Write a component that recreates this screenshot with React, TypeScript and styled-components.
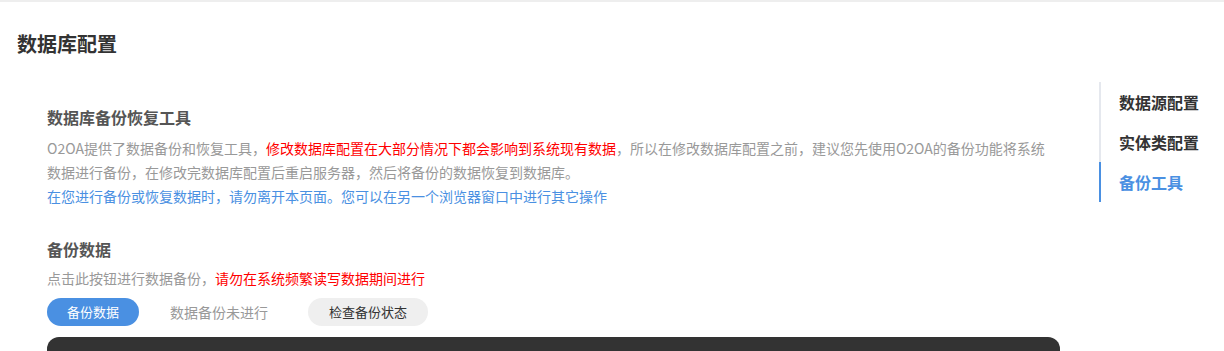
import styled, { createGlobalStyle } from 'styled-components';

const GlobalStyle = createGlobalStyle`
  html, body {
    margin: 0;
    padding: 0;
    background: #fff;
    font-family: "Noto Sans CJK SC", "Noto Sans", sans-serif;
  }
`;

const Page = styled.div`
  width: 1224px;
  height: 351px;
  overflow: hidden;
  border-top: 2px solid #eeeeee;
  box-sizing: border-box;
`;

const PageTitle = styled.h1`
  margin: 0;
  padding: 22px 0 0 17px;
  font-size: 20px;
  line-height: 40px;
  font-weight: bold;
  color: #333;
`;

const Body = styled.div`
  display: flex;
  margin-top: 18px;
`;

const Content = styled.div`
  width: 1013px;
  padding-left: 47px;
  flex-shrink: 0;
`;

const SectionTitle = styled.div<{ $gap: number }>`
  margin-top: ${(p) => p.$gap}px;
  font-size: 16px;
  line-height: 30px;
  font-weight: bold;
  color: #555;
`;

const Text = styled.div<{ $gap?: number }>`
  max-width: 1002px;
  margin-top: ${(p) => p.$gap ?? 0}px;
  font-size: 14px;
  line-height: 24px;
  color: #999;
`;

const Red = styled.span`
  color: #ff0000;
`;

const Blue = styled.div`
  font-size: 14px;
  line-height: 24px;
  color: #4a90e2;
`;

const ActionRow = styled.div`
  display: flex;
  align-items: center;
  margin-top: 8px;
  height: 28px;
`;

const Pill = styled.button<{ $primary?: boolean }>`
  height: 28px;
  padding: 0 ${(p) => (p.$primary ? 20 : 21)}px;
  border: none;
  border-radius: 14px;
  font-family: inherit;
  font-size: 13px;
  line-height: 28px;
  cursor: pointer;
  background: ${(p) => (p.$primary ? '#4a90e2' : '#efefef')};
  color: ${(p) => (p.$primary ? '#fff' : '#333')};
`;

const Status = styled.span`
  margin: 0 40px 0 31px;
  font-size: 14px;
  color: #999;
`;

const Console = styled.div`
  margin-top: 11px;
  height: 260px;
  background: #333;
  border-radius: 12px;
`;

const Nav = styled.nav`
  margin-left: 39px;
  display: flex;
  flex-direction: column;
`;

const NavItem = styled.div<{ $active?: boolean }>`
  height: 40px;
  line-height: 40px;
  padding-left: 18px;
  border-left: 2px solid ${(p) => (p.$active ? '#4a90e2' : '#e5e8ee')};
  font-size: 16px;
  font-weight: bold;
  color: ${(p) => (p.$active ? '#4a90e2' : '#333')};
  cursor: pointer;
`;

export default function App() {
  return (
    <>
      <GlobalStyle />
      <Page>
        <PageTitle>数据库配置</PageTitle>
        <Body>
          <Content>
            <SectionTitle $gap={20}>数据库备份恢复工具</SectionTitle>
            <Text $gap={4}>
              O2OA提供了数据备份和恢复工具，
              <Red>修改数据库配置在大部分情况下都会影响到系统现有数据</Red>
              ，所以在修改数据库配置之前，建议您先使用O2OA的备份功能将系统数据进行备份，在修改完数据库配置后重启服务器，然后将备份的数据恢复到数据库。
            </Text>
            <Blue>在您进行备份或恢复数据时，请勿离开本页面。您可以在另一个浏览器窗口中进行其它操作</Blue>

            <SectionTitle $gap={26}>备份数据</SectionTitle>
            <Text $gap={2}>
              点击此按钮进行数据备份，<Red>请勿在系统频繁读写数据期间进行</Red>
            </Text>
            <ActionRow>
              <Pill $primary>备份数据</Pill>
              <Status>数据备份未进行</Status>
              <Pill>检查备份状态</Pill>
            </ActionRow>
            <Console />
          </Content>
          <Nav>
            <NavItem>数据源配置</NavItem>
            <NavItem>实体类配置</NavItem>
            <NavItem $active>备份工具</NavItem>
          </Nav>
        </Body>
      </Page>
    </>
  );
}
